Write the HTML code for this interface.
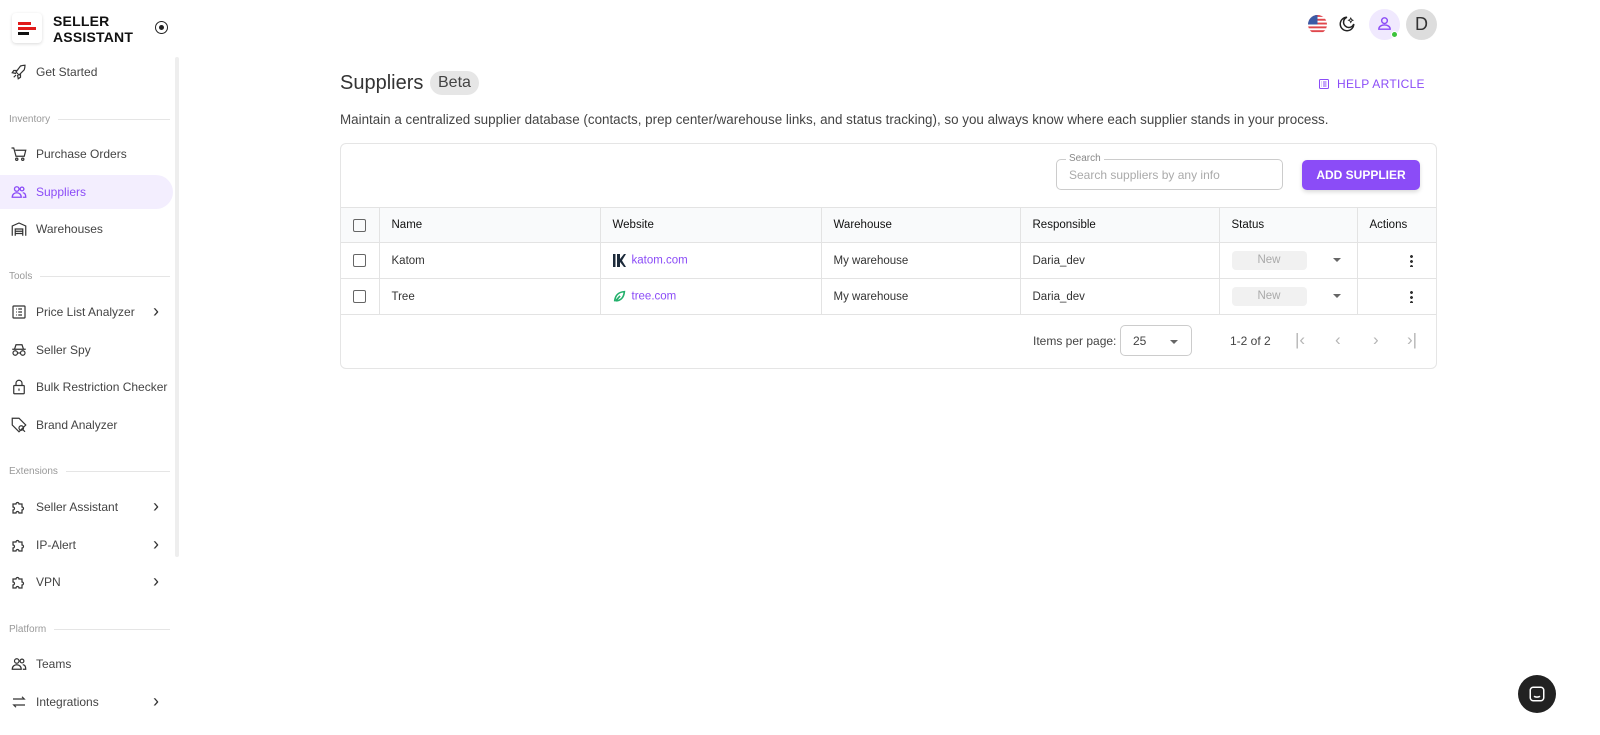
<!DOCTYPE html>
<html><head><meta charset="utf-8"><style>
*{box-sizing:border-box;margin:0;padding:0}
body{width:1600px;height:735px;overflow:hidden;background:#fff;font-family:"Liberation Sans",sans-serif;color:#333;position:relative}
.sb{position:absolute;left:0;top:0;width:180px;height:735px}
.logo{position:absolute;left:12px;top:13px;width:30px;height:30px;border-radius:4px;box-shadow:0 1px 3px rgba(0,0,0,.15);background:#fff}
.logo i{position:absolute;left:6px;height:3px;display:block}
.brand{position:absolute;left:53px;top:13px;font-size:14px;font-weight:bold;color:#111;line-height:16px;letter-spacing:.2px}
.rec{position:absolute;left:155px;top:21px;width:13px;height:13px;border:1.5px solid #222;border-radius:50%}
.rec:after{content:"";position:absolute;left:2.5px;top:2.5px;width:5px;height:5px;background:#222;border-radius:50%}
.scroll{position:absolute;left:175px;top:57px;width:4px;height:500px;background:#eee;border-radius:2px}
.it{position:absolute;left:0;width:173px;height:34px;display:flex;align-items:center;padding-left:10px;font-size:12px;color:#444}
.it svg{width:18px;height:18px;margin-right:8px;flex:none}
.it.act{background:#f3eefe;color:#8b4cf7;border-radius:0 17px 17px 0}
.it .ch{position:absolute;left:153px;top:6px;font-size:18px;color:#333}
.sec{position:absolute;left:9px;font-size:10px;color:#999;width:161px;display:flex;align-items:center}
.sec:after{content:"";flex:1;height:1px;background:#e5e5e5;margin-left:8px}
h1{position:absolute;left:340px;top:72px;font-size:20px;font-weight:normal;color:#333}
.beta{position:absolute;left:430px;top:71px;background:#e6e6e6;border-radius:12px;padding:3px 8px;font-size:16px;color:#444}
.desc{position:absolute;left:340px;top:112px;font-size:13.4px;color:#444}
.help{position:absolute;left:1318px;top:77px;font-size:12px;color:#8b4cf7;letter-spacing:.3px}
.card{position:absolute;left:340px;top:143px;width:1097px;height:226px;border:1px solid #e5e5e5;border-radius:6px}
.search{position:absolute;left:1056px;top:159px;width:227px;height:31px;border:1px solid #ccc;border-radius:5px}
.search span{position:absolute;left:12px;top:8px;font-size:12px;color:#aaa}
.search b{position:absolute;left:9px;top:-7px;background:#fff;padding:0 3px;font-size:10px;color:#888;font-weight:normal}
.add{position:absolute;left:1302px;top:160px;width:118px;height:30px;background:#8b4cf7;border-radius:5px;color:#fff;font-size:12px;font-weight:bold;display:flex;align-items:center;justify-content:center;box-shadow:0 2px 4px rgba(0,0,0,.15)}
table{position:absolute;left:341px;top:207px;width:1095px;border-collapse:collapse;font-size:11.5px}
td,th{border-top:1px solid #e3e3e3;border-left:1px solid #e3e3e3;height:36px;padding-left:12px;text-align:left}
th{height:35px;font-weight:normal;color:#111;background:#f9fafb;font-size:11.5px}
tr td:first-child,tr th:first-child{border-left:none}
tr:last-child td{border-bottom:1px solid #e3e3e3}
.cb{width:13px;height:13px;border:1.5px solid #666;border-radius:2px;display:inline-block;vertical-align:middle}
.lnk{color:#8b4cf7}
.st{display:inline-block;width:75px;height:19px;background:#f1f1f1;border-radius:4px;color:#aaa;text-align:center;line-height:19px}
.caret{display:inline-block;margin-left:26px;border-left:4px solid transparent;border-right:4px solid transparent;border-top:4px solid #666;vertical-align:middle}
.dots{display:inline-block;width:3px;height:13px;background:radial-gradient(circle,#333 1.3px,transparent 1.6px) 0 0/3px 5px repeat-y;vertical-align:middle;margin-left:40px}
.pg{position:absolute;top:334px;font-size:12px;color:#444}
.ar{position:absolute;top:330px;font-size:17px;color:#b5b5b5}
.ipp{position:absolute;left:1120px;top:325px;width:72px;height:31px;border:1px solid #ccc;border-radius:5px;font-size:12px;color:#444;padding:8px 12px}
.chat{position:absolute;left:1518px;top:675px;width:38px;height:38px;border-radius:50%;background:#222}
</style></head><body>
<div class="sb">
<div class="logo"><i style="top:9px;width:13px;background:#e01a1a"></i><i style="top:14px;width:18px;background:#e01a1a"></i><i style="top:19px;width:11px;background:#111"></i></div>
<div class="brand">SELLER<br>ASSISTANT</div>
<div class="rec"></div>
<div class="scroll"></div>
<div class="it" style="top:55px"><svg viewBox="0 0 24 24" fill="none" stroke="#333" stroke-width="1.6"><path d="M5 19l3-3M14 4c3-1 6-1 6-1s0 3-1 6l-7 7-4-4 6-8zM9 10H5l-2 3 5 1M14 15v4l-3 2-1-5"/></svg>Get Started</div>
<div class="sec" style="top:114px">Inventory</div>
<div class="it" style="top:137px"><svg viewBox="0 0 24 24" fill="none" stroke="#333" stroke-width="1.6"><path d="M2 4h3l3 11h11l2-8H7"/><circle cx="9" cy="19" r="1.5"/><circle cx="17" cy="19" r="1.5"/></svg>Purchase Orders</div>
<div class="it act" style="top:175px"><svg viewBox="0 0 24 24" fill="none" stroke="#8b4cf7" stroke-width="1.8"><circle cx="9" cy="8" r="3"/><path d="M3 19c0-4 3-6 6-6s6 2 6 6z"/><circle cx="16" cy="8" r="2.5"/><path d="M17 13c3 0 4 3 4 6h-4"/></svg>Suppliers</div>
<div class="it" style="top:212px"><svg viewBox="0 0 24 24" fill="none" stroke="#333" stroke-width="1.6"><path d="M3 21V8l9-4 9 4v13M7 21v-9h10v9M7 15h10M7 18h10"/></svg>Warehouses</div>
<div class="sec" style="top:271px">Tools</div>
<div class="it" style="top:295px"><svg viewBox="0 0 24 24" fill="none" stroke="#333" stroke-width="1.6"><rect x="4" y="4" width="16" height="16" rx="1"/><path d="M8 8h1M11 8h5M8 12h1M11 12h5M8 16h1M11 16h5"/></svg>Price List Analyzer<span class="ch">›</span></div>
<div class="it" style="top:333px"><svg viewBox="0 0 24 24" fill="none" stroke="#333" stroke-width="1.6"><path d="M3 11h18M6 11l2-6h8l2 6"/><circle cx="7" cy="16" r="3"/><circle cx="17" cy="16" r="3"/><path d="M10 16h4"/></svg>Seller Spy</div>
<div class="it" style="top:370px"><svg viewBox="0 0 24 24" fill="none" stroke="#333" stroke-width="1.6"><rect x="5" y="10" width="14" height="11" rx="1"/><path d="M8 10V7a4 4 0 018 0v3M12 14v3"/></svg>Bulk Restriction Checker</div>
<div class="it" style="top:408px"><svg viewBox="0 0 24 24" fill="none" stroke="#333" stroke-width="1.6"><path d="M3 12V3h9l9 9-9 9z"/><circle cx="15" cy="16" r="3"/><path d="M17 18l3 3"/></svg>Brand Analyzer</div>
<div class="sec" style="top:466px">Extensions</div>
<div class="it" style="top:490px"><svg viewBox="0 0 24 24" fill="none" stroke="#333" stroke-width="1.6"><path d="M4 8h4a2 2 0 114 0h4v4a2 2 0 110 4v4h-4a2 2 0 10-4 0H4v-4a2 2 0 100-4z"/></svg>Seller Assistant<span class="ch">›</span></div>
<div class="it" style="top:528px"><svg viewBox="0 0 24 24" fill="none" stroke="#333" stroke-width="1.6"><path d="M4 8h4a2 2 0 114 0h4v4a2 2 0 110 4v4h-4a2 2 0 10-4 0H4v-4a2 2 0 100-4z"/></svg>IP-Alert<span class="ch">›</span></div>
<div class="it" style="top:565px"><svg viewBox="0 0 24 24" fill="none" stroke="#333" stroke-width="1.6"><path d="M4 8h4a2 2 0 114 0h4v4a2 2 0 110 4v4h-4a2 2 0 10-4 0H4v-4a2 2 0 100-4z"/></svg>VPN<span class="ch">›</span></div>
<div class="sec" style="top:624px">Platform</div>
<div class="it" style="top:647px"><svg viewBox="0 0 24 24" fill="none" stroke="#333" stroke-width="1.6"><circle cx="9" cy="8" r="3"/><path d="M3 19c0-4 3-6 6-6s6 2 6 6z"/><circle cx="16" cy="8" r="2.5"/><path d="M17 13c3 0 4 3 4 6h-4"/></svg>Teams</div>
<div class="it" style="top:685px"><svg viewBox="0 0 24 24" fill="none" stroke="#333" stroke-width="1.6"><path d="M4 8h15l-3-3M20 16H5l3 3"/></svg>Integrations<span class="ch">›</span></div>
</div>

<svg style="position:absolute;left:1308px;top:15px" width="19" height="19" viewBox="0 0 20 20"><clipPath id="c"><circle cx="10" cy="10" r="10"/></clipPath><g clip-path="url(#c)"><rect width="20" height="20" fill="#fff"/><g fill="#e0474c"><rect y="0" width="20" height="2"/><rect y="4" width="20" height="2"/><rect y="8" width="20" height="2"/><rect y="12" width="20" height="2"/><rect y="16" width="20" height="2"/></g><rect width="10" height="10" fill="#3b5aa6"/></g></svg>
<svg style="position:absolute;left:1338px;top:15px" width="18" height="18" viewBox="0 0 24 24" fill="none" stroke="#222" stroke-width="2"><path d="M12 3a7 7 0 109 9 9 9 0 11-9-9z"/><path d="M17 4l1 2 2 1-2 1-1 2-1-2-2-1 2-1z" stroke-width="1.2"/></svg>
<div style="position:absolute;left:1369px;top:9px;width:31px;height:31px;border-radius:50%;background:#f0e9fe"></div>
<svg style="position:absolute;left:1376px;top:15px" width="17" height="17" viewBox="0 0 24 24" fill="none" stroke="#8b4cf7" stroke-width="2"><circle cx="12" cy="8" r="4"/><path d="M4 20c0-4 4-6 8-6s8 2 8 6z"/></svg>
<div style="position:absolute;left:1391px;top:31px;width:7px;height:7px;border-radius:50%;background:#3cc33c;border:1px solid #fff"></div>
<div style="position:absolute;left:1406px;top:9px;width:31px;height:31px;border-radius:50%;background:#ddd;font-size:18px;color:#333;text-align:center;line-height:31px">D</div>

<h1>Suppliers</h1><div class="beta">Beta</div>
<div class="help"><svg width="12" height="12" viewBox="0 0 24 24" fill="none" stroke="#8b4cf7" stroke-width="2" style="vertical-align:-2px;margin-right:7px"><rect x="3" y="3" width="18" height="18" rx="2"/><path d="M7 8h1M10 8h7M7 12h1M10 12h7M7 16h1M10 16h7"/></svg>HELP ARTICLE</div>
<div class="desc">Maintain a centralized supplier database (contacts, prep center/warehouse links, and status tracking), so you always know where each supplier stands in your process.</div>
<div class="card"></div>
<div class="search"><b>Search</b><span>Search suppliers by any info</span></div>
<div class="add">ADD SUPPLIER</div>
<table>
<tr><th style="width:38px"><span class="cb"></span></th><th style="width:221px">Name</th><th style="width:221px">Website</th><th style="width:199px">Warehouse</th><th style="width:199px">Responsible</th><th style="width:138px">Status</th><th>Actions</th></tr>
<tr><td><span class="cb"></span></td><td>Katom</td><td><svg width="13" height="13" viewBox="0 0 13 13" style="vertical-align:middle;margin-right:6px"><rect x="0" y="0" width="2.5" height="13" fill="#1c2a3a"/><path d="M4 0h3v5l4-5h2L9 6.5 13 13h-2L7 8v5H4z" fill="#1c2a3a"/></svg><span class="lnk">katom.com</span></td><td>My warehouse</td><td>Daria_dev</td><td><span class="st">New</span><span class="caret"></span></td><td><span class="dots"></span></td></tr>
<tr><td><span class="cb"></span></td><td>Tree</td><td><svg width="13" height="13" viewBox="0 0 24 24" style="vertical-align:middle;margin-right:6px" fill="none" stroke="#22b06b" stroke-width="3"><path d="M3 21C4 9 10 4 21 3 20 14 14 20 5 20M5 20l8-9"/></svg><span class="lnk">tree.com</span></td><td>My warehouse</td><td>Daria_dev</td><td><span class="st">New</span><span class="caret"></span></td><td><span class="dots"></span></td></tr>
</table>
<div class="pg" style="left:1033px">Items per page:</div>
<div class="ipp">25<span class="caret" style="margin-left:24px"></span></div>
<div class="pg" style="left:1230px">1-2 of 2</div>
<div class="ar" style="left:1295px">|‹</div>
<div class="ar" style="left:1335px">‹</div>
<div class="ar" style="left:1373px">›</div>
<div class="ar" style="left:1407px">›|</div>
<div class="chat"><svg style="position:absolute;left:10px;top:10px" width="18" height="18" viewBox="0 0 24 24" fill="none" stroke="#fff" stroke-width="2"><rect x="3" y="3" width="18" height="18" rx="4"/><path d="M8 15c2 1.5 6 1.5 8 0"/></svg></div>
</body></html>
